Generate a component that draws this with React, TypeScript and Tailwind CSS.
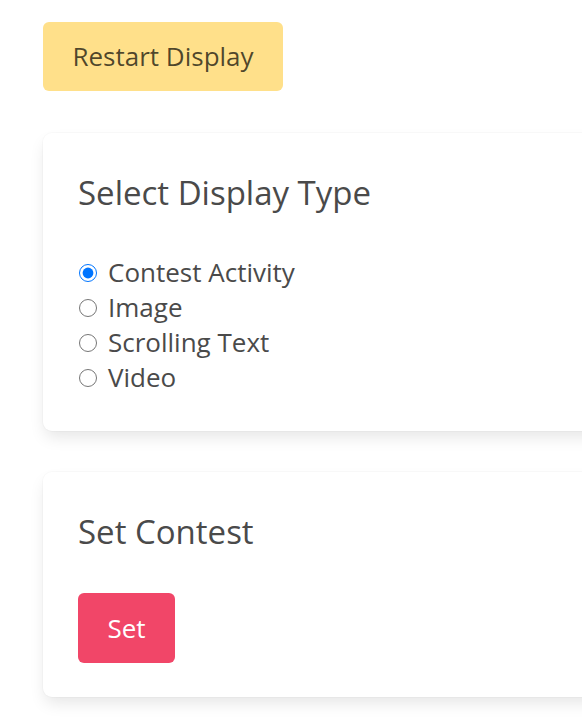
import React, { useState } from 'react';

const options = ['Contest Activity', 'Image', 'Scrolling Text', 'Video'];

export default function App() {
  const [selected, setSelected] = useState('Contest Activity');

  return (
    <div
      className="min-h-[717px] w-full overflow-hidden bg-white pl-[43px] pt-[22px] pb-[20px] text-[#4a4a4a]"
      style={{ fontFamily: '"Open Sans", "Noto Sans", sans-serif' }}
    >
      <button className="h-[69px] w-[240px] rounded-[6px] bg-[#ffe08a] text-[26px] text-black/70">
        Restart Display
      </button>

      <div className="mt-[42px] w-[620px] rounded-[9px] bg-white pl-[35px] pt-[36px] pb-[36px] shadow-[0_8px_16px_-2px_rgba(10,10,10,0.1),0_0_0_1px_rgba(10,10,10,0.02)]">
        <h2 className="text-[33px] leading-[48px]">Select Display Type</h2>
        <div className="mt-[38px] flex flex-col">
          {options.map((o) => (
            <label key={o} className="flex h-[35px] items-center text-[26px]">
              <input
                type="radio"
                name="display"
                checked={selected === o}
                onChange={() => setSelected(o)}
                className="m-0 ml-[1px] h-[18px] w-[18px] shrink-0"
              />
              <span className="ml-[11px]">{o}</span>
            </label>
          ))}
        </div>
      </div>

      <div className="mt-[41px] w-[620px] rounded-[9px] bg-white pl-[35px] pt-[36px] pb-[34px] shadow-[0_8px_16px_-2px_rgba(10,10,10,0.1),0_0_0_1px_rgba(10,10,10,0.02)]">
        <h2 className="text-[33px] leading-[48px]">Set Contest</h2>
        <button className="mt-[37px] h-[70px] w-[97px] rounded-[6px] bg-[#f14668] text-[26px] text-white">
          Set
        </button>
      </div>
    </div>
  );
}
